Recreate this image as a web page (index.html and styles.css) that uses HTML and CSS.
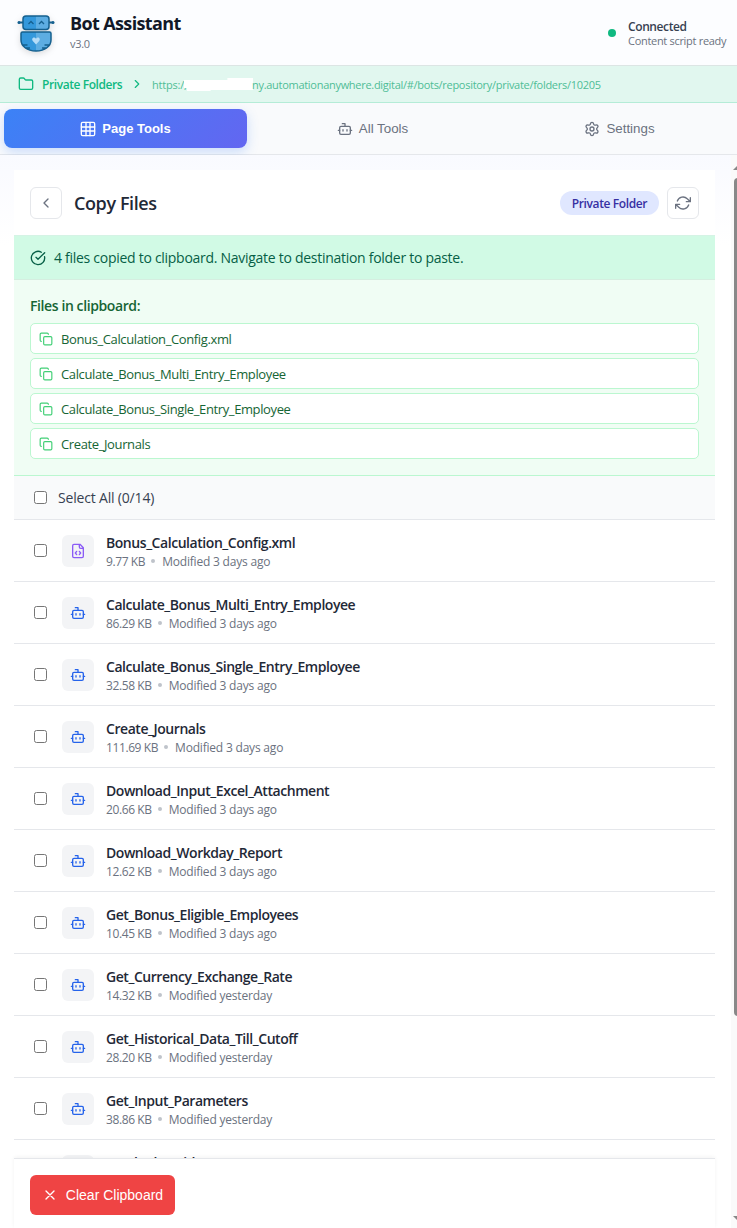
FILE: index.html
```html
<!DOCTYPE html>
<html lang="en">
<head>
<meta charset="utf-8">
<title>Bot Assistant</title>
<link rel="stylesheet" href="styles.css">
</head>
<body>
<svg class="sprite" aria-hidden="true">
  <symbol id="bot" viewBox="0 0 24 24"><path d="M12 8V4H8M2 14h2M20 14h2M15 13v2M9 13v2"/><rect x="4" y="8" width="16" height="12" rx="2"/></symbol>
  <symbol id="copy" viewBox="0 0 24 24"><rect x="8" y="8" width="14" height="14" rx="2"/><path d="M4 16c-1.100 0-2-.9-2-2V4c0-1.100.9-2 2-2h10c1.100 0 2 .9 2 2"/></symbol>
  <symbol id="code" viewBox="0 0 24 24"><path d="M15 2H6a2 2 0 0 0-2 2v16a2 2 0 0 0 2 2h12a2 2 0 0 0 2-2V7zM14 2v4a2 2 0 0 0 2 2h4M10 12.500 8 15l2 2.500M14 12.500l2 2.500-2 2.500"/></symbol>
</svg>
<div class="app">
  <header class="header">
    <svg class="logo" viewBox="0 0 38 38">
      <path d="M1.500 8.500H6M32 8.500h4.500" stroke="#15608f" stroke-width="2"/>
      <circle cx="2" cy="8.500" r="1.500" fill="#15608f"/><circle cx="36" cy="8.500" r="1.500" fill="#15608f"/>
      <rect x="6" y="2" width="26" height="13.500" rx="3" fill="#3498db"/>
      <path d="M19 2h10a3 3 0 0 1 3 3v7.500a3 3 0 0 1-3 3H19z" fill="#5dade2"/>
      <rect x="6" y="2" width="26" height="13.500" rx="3" fill="none" stroke="#15608f" stroke-width="1.500"/>
      <path d="M11.500 10l2.500-2.500 2.500 2.500M22 10l2.500-2.500L27 10" fill="none" stroke="#15608f" stroke-width="1.300"/>
      <path d="M4 19.500q0-1.500 1.500-1.500h27q1.500 0 1.500 1.500v6.500c0 6-6 11-15 11S4 32 4 26z" fill="#3498db"/>
      <path d="M19 18h13.500q1.500 0 1.500 1.500v6.500c0 6-6 11-15 11z" fill="#5dade2"/>
      <path d="M4 19.500q0-1.500 1.500-1.500h27q1.500 0 1.500 1.500v6.500c0 6-6 11-15 11S4 32 4 26zM5 31h5.500M8 34h5M33 31h-5.500M30 34h-5" fill="none" stroke="#15608f" stroke-width="1.500"/>
      <path d="M19 30.500l-3.200-3.500c-2-2.500 1.500-5 3.200-2.300 1.700-2.700 5.200-.2 3.200 2.300z" fill="#b5dcf7"/>
    </svg>
    <div class="brand"><h1 class="brand-name">Bot Assistant</h1><div class="version">v3.0</div></div>
    <div class="status"><span class="status-dot"></span><div><div class="status-title">Connected</div><div class="status-sub">Content script ready</div></div></div>
  </header>
  <div class="path">
    <svg class="icon folder" viewBox="0 0 24 24"><path d="M20 20a2 2 0 0 0 2-2V8a2 2 0 0 0-2-2h-7.900a2 2 0 0 1-1.690-.9L9.600 3.900A2 2 0 0 0 7.930 3H4a2 2 0 0 0-2 2v13a2 2 0 0 0 2 2Z"/></svg>
    <span class="path-name">Private Folders</span>
    <svg class="icon chevron" viewBox="0 0 24 24"><path d="m9 18 6-6-6-6"/></svg>
    <span class="url-start">https:/,</span>
    <svg class="redaction" viewBox="0 0 71 16"><path d="M0 4h44V2h26v12H27v1H3v-3H0z"/></svg>
    <span class="url">ny.automationanywhere.digital/#/bots/repository/private/folders/10205</span>
  </div>
  <nav class="tabs">
    <button class="tab active"><svg class="icon i16" viewBox="0 0 24 24"><rect x="2" y="2" width="20" height="20" rx="2"/><path d="M2 9h20M2 15h20M9 2v20M15 2v20"/></svg><span class="tab-label">Page Tools</span></button>
    <button class="tab"><svg class="icon i16"><use href="#bot"/></svg><span>All Tools</span></button>
    <button class="tab"><svg class="icon i16" viewBox="0 0 24 24"><path d="M9.671 4.136a2.340 2.340 0 0 1 4.659 0 2.340 2.340 0 0 0 3.319 1.915 2.340 2.340 0 0 1 2.330 4.033 2.340 2.340 0 0 0 0 3.831 2.340 2.340 0 0 1-2.330 4.033 2.340 2.340 0 0 0-3.319 1.915 2.340 2.340 0 0 1-4.659 0 2.340 2.340 0 0 0-3.320-1.915 2.340 2.340 0 0 1-2.330-4.033 2.340 2.340 0 0 0 0-3.831A2.340 2.340 0 0 1 6.350 6.051a2.340 2.340 0 0 0 3.319-1.915"/><circle cx="12" cy="12" r="3"/></svg><span>Settings</span></button>
  </nav>
  <div class="body">
    <main class="card">
      <div class="card-head">
        <button class="square"><svg class="icon i16" viewBox="0 0 24 24"><path d="m15 18-6-6 6-6"/></svg></button>
        <h2 class="card-title">Copy Files</h2>
        <span class="badge"><span class="badge-text">Private Folder</span></span>
        <button class="square"><svg class="icon i16" viewBox="0 0 24 24"><path d="M23 4v6h-6M1 20v-6h6M3.510 9a9 9 0 0 1 14.850-3.360L23 10M1 14l4.640 4.360A9 9 0 0 0 20.490 15"/></svg></button>
      </div>
      <div class="banner"><svg class="icon i16" viewBox="0 0 24 24"><path d="M21.801 10A10 10 0 1 1 17 3.335"/><path d="m9 11 3 3L22 4"/></svg><span class="banner-text">4 files copied to clipboard. Navigate to destination folder to paste.</span></div>
      <section class="clipboard">
        <h3 class="clip-title">Files in clipboard:</h3>
        <div class="clip-list">
          <div class="clip"><svg class="icon i14"><use href="#copy"/></svg><span>Bonus_Calculation_Config.xml</span></div>
          <div class="clip"><svg class="icon i14"><use href="#copy"/></svg><span>Calculate_Bonus_Multi_Entry_Employee</span></div>
          <div class="clip"><svg class="icon i14"><use href="#copy"/></svg><span>Calculate_Bonus_Single_Entry_Employee</span></div>
          <div class="clip"><svg class="icon i14"><use href="#copy"/></svg><span>Create_Journals</span></div>
        </div>
      </section>
      <div class="select-all"><span class="check"></span><span class="select-label">Select All (0/14)</span></div>
      <div class="files">
        <div class="file"><span class="check"></span><span class="tile code"><svg class="icon i16"><use href="#code"/></svg></span><div><div class="name">Bonus_Calculation_Config.xml</div><div class="meta"><span>9.77 KB</span><i class="sep"></i><span class="when">Modified 3 days ago</span></div></div></div>
        <div class="file"><span class="check"></span><span class="tile"><svg class="icon i16"><use href="#bot"/></svg></span><div><div class="name">Calculate_Bonus_Multi_Entry_Employee</div><div class="meta"><span>86.29 KB</span><i class="sep"></i><span class="when">Modified 3 days ago</span></div></div></div>
        <div class="file"><span class="check"></span><span class="tile"><svg class="icon i16"><use href="#bot"/></svg></span><div><div class="name">Calculate_Bonus_Single_Entry_Employee</div><div class="meta"><span>32.58 KB</span><i class="sep"></i><span class="when">Modified 3 days ago</span></div></div></div>
        <div class="file"><span class="check"></span><span class="tile"><svg class="icon i16"><use href="#bot"/></svg></span><div><div class="name">Create_Journals</div><div class="meta"><span>111.69 KB</span><i class="sep"></i><span class="when">Modified 3 days ago</span></div></div></div>
        <div class="file"><span class="check"></span><span class="tile"><svg class="icon i16"><use href="#bot"/></svg></span><div><div class="name">Download_Input_Excel_Attachment</div><div class="meta"><span>20.66 KB</span><i class="sep"></i><span class="when">Modified 3 days ago</span></div></div></div>
        <div class="file"><span class="check"></span><span class="tile"><svg class="icon i16"><use href="#bot"/></svg></span><div><div class="name">Download_Workday_Report</div><div class="meta"><span>12.62 KB</span><i class="sep"></i><span class="when">Modified 3 days ago</span></div></div></div>
        <div class="file"><span class="check"></span><span class="tile"><svg class="icon i16"><use href="#bot"/></svg></span><div><div class="name">Get_Bonus_Eligible_Employees</div><div class="meta"><span>10.45 KB</span><i class="sep"></i><span class="when">Modified 3 days ago</span></div></div></div>
        <div class="file"><span class="check"></span><span class="tile"><svg class="icon i16"><use href="#bot"/></svg></span><div><div class="name">Get_Currency_Exchange_Rate</div><div class="meta"><span>14.32 KB</span><i class="sep"></i><span class="when">Modified yesterday</span></div></div></div>
        <div class="file"><span class="check"></span><span class="tile"><svg class="icon i16"><use href="#bot"/></svg></span><div><div class="name">Get_Historical_Data_Till_Cutoff</div><div class="meta"><span>28.20 KB</span><i class="sep"></i><span class="when">Modified yesterday</span></div></div></div>
        <div class="file"><span class="check"></span><span class="tile"><svg class="icon i16"><use href="#bot"/></svg></span><div><div class="name">Get_Input_Parameters</div><div class="meta"><span>38.86 KB</span><i class="sep"></i><span class="when">Modified yesterday</span></div></div></div>
        <div class="file"><span class="check"></span><span class="tile"><svg class="icon i16"><use href="#bot"/></svg></span><div class="last"><div class="name">Get_lookup_id</div></div></div>
      </div>
      <footer class="footer"><button class="clear"><svg class="icon i16" viewBox="0 0 24 24"><path d="M18 6 6 18M6 6l12 12"/></svg><span>Clear Clipboard</span></button></footer>
    </main>
    <div class="scrollbar"><svg class="arrow" viewBox="0 0 12 6"><path d="M6 0l6 6H0z"/></svg><div class="thumb"></div><svg class="arrow" viewBox="0 0 12 6"><path d="M0 0h12L6 6z"/></svg></div>
  </div>
</div>
</body>
</html>
```
FILE: styles.css
```css
* { box-sizing: border-box; }
body { margin: 0; overflow: hidden; font-family: "Open Sans", "Noto Sans", sans-serif; color: #1f2937; background: #fff; }
h1, h2, h3 { margin: 0; }
button { font-family: "Liberation Sans", Arial, sans-serif; border: 0; padding: 0; background: none; }
.sprite { display: none; }
.app { width: 737px; height: 1228px; display: flex; flex-direction: column; overflow: hidden; white-space: nowrap; }
.icon { flex: none; fill: none; stroke: currentColor; stroke-width: 2; stroke-linecap: round; stroke-linejoin: round; }
.i16 { width: 16px; height: 16px; }
.i14 { width: 14px; height: 14px; }

.header { flex: none; height: 66px; padding: 0 11px 0 17px; display: flex; align-items: center; background: #fcfdff; border-bottom: 1px solid #dce5e4; }
.logo { width: 38px; height: 38px; margin-right: 15px; filter: drop-shadow(0 2px 3px #0002); }
.brand { flex: 1; padding-bottom: 4px; }
.brand-name { font-size: 18px; line-height: 24px; font-weight: 700; letter-spacing: -.63px; color: #111827; }
.version { font-size: 11px; line-height: 15px; color: #6b7280; margin-top: 1px; letter-spacing: -.3px; }
.status { display: flex; align-items: center; gap: 12px; width: 118px; }
.status-dot { flex: none; width: 8px; height: 8px; border-radius: 50%; background: #10b981; }
.status-title { font-size: 12px; line-height: 14px; font-weight: 600; color: #374151; letter-spacing: -.4px; margin-top: 2px; }
.status-sub { font-size: 11px; line-height: 14px; color: #6b7280; letter-spacing: -.3px; }

.path { flex: none; height: 37px; padding-left: 18px; display: flex; align-items: center; background: #e1f7ef; border-bottom: 1px solid #b5ecd7; color: #10b981; }
.folder { width: 16px; height: 16px; margin-right: 8px; }
.path-name { width: 80px; font-size: 12px; font-weight: 600; letter-spacing: -.42px; }
.chevron { width: 14px; height: 14px; margin: 0 8px 0 8px; }
.url-start { width: 32px; font-size: 11px; color: #4fbd96; letter-spacing: -.2px; }
.redaction { flex: none; width: 70px; height: 16px; fill: #fff; }
.url { font-size: 11px; color: #4fbd96; letter-spacing: -.29px; margin-left: -2px; }

.tabs { flex: none; height: 52px; padding: 6px 4px; display: flex; gap: 4px; background: #f9fafc; border-bottom: 1px solid #e5e7eb; }
.tab { flex: 0 0 243px; height: 39px; display: flex; align-items: center; justify-content: center; gap: 6px; font-size: 13.333px; color: #6b7280; border-radius: 8px; }
.active { color: #fff; background: linear-gradient(135deg, #3b82f6, #6366f1); box-shadow: 0 4px 12px #3b82f640; }
.tab-label { font-weight: 700; font-size: 13px; }

.body { flex: 1; min-height: 0; display: flex; justify-content: space-between; padding-left: 14px; background: linear-gradient(#f9faff, #fff 90px); }
.card { width: 701px; margin-top: 15px; display: flex; flex-direction: column; background: #fff; }
.card-head { flex: none; height: 65px; padding: 0 16px; display: flex; align-items: center; }
.square { width: 32px; height: 32px; display: flex; align-items: center; justify-content: center; border: 1px solid #e5e7eb; border-radius: 6px; background: #fff; color: #6b7280; }
.card-title { flex: 1; margin-left: 12px; font-size: 18px; font-weight: 600; letter-spacing: -.4px; }
.badge { width: 99px; height: 24px; margin-right: 8px; display: flex; align-items: center; justify-content: center; border-radius: 12px; background: #e0e7ff; color: #3730a3; font-size: 12px; font-weight: 600; letter-spacing: -.38px; padding-top: 1px; }
.banner { flex: none; height: 45px; padding: 0 16px; display: flex; align-items: center; gap: 8px; background: #d1fae5; border-bottom: 1px solid #d5eee0; border-top: 1px solid #d5f3e5; color: #065f46; font-size: 14px; letter-spacing: -.28px; }
.clipboard { flex: none; height: 196px; padding: 15px 16px 0; background: #f0fdf4; border-bottom: 1px solid #bbf7d0; }
.clip-title { font-size: 14px; line-height: 21px; font-weight: 600; color: #166534; letter-spacing: -.4px; margin-bottom: 7px; }
.clip-list { display: grid; gap: 4px; }
.clip { height: 31px; padding: 0 8px; display: flex; align-items: center; gap: 8px; background: #fff; border: 1px solid #bbf7d0; border-radius: 5px; color: #166534; font-size: 13px; letter-spacing: -.38px; }
.clip .icon { color: #41cf76; }
.select-all { flex: none; height: 44px; padding-left: 20px; display: flex; align-items: center; gap: 11px; background: #f9fafb; border-bottom: 1px solid #e5e7eb; font-size: 14px; color: #374151; letter-spacing: -.18px; }
.check { flex: none; width: 13px; height: 13px; border: 1px solid #767676; border-radius: 2.500px; background: #fff; }
.files { flex: 1; min-height: 0; overflow: hidden; }
.file { height: 62px; padding-left: 20px; display: flex; align-items: center; border-bottom: 1px solid #e5e7eb; }
.tile { flex: none; width: 32px; height: 32px; margin: 0 12px 0 15px; display: flex; align-items: center; justify-content: center; border-radius: 6px; background: #f3f4f6; color: #2563eb; }
.code { color: #8b5cf6; }
.name { padding-top: 1px; font-size: 14px; line-height: 19px; font-weight: 600; letter-spacing: -.45px; }
.meta { display: flex; align-items: center; margin-top: 1px; font-size: 12px; line-height: 17px; color: #6b7280; letter-spacing: -.4px; }
.when { letter-spacing: -.2px; }
.last { align-self: flex-start; padding-top: 12px; }
.sep { width: 4px; height: 4px; margin: 0 7px 0 6px; border-radius: 50%; background: #bfc3ca; }
.footer { flex: none; height: 70px; padding: 16px; border-top: 1px solid #e5e7eb; background: #fff; box-shadow: 0 -1px 4px #0000000d; }
.clear { width: 145px; height: 40px; display: flex; align-items: center; justify-content: center; gap: 8px; border-radius: 6px; background: #ef4444; color: #fff; font-size: 14px; }
.scrollbar { width: 6px; display: flex; flex-direction: column; overflow: hidden; background: #fafafa; padding: 9px 0 6px 3px; }
.arrow { flex: none; width: 12px; height: 6px; fill: #888; margin-left: -1px; }
.thumb { flex: none; width: 8px; height: 838px; margin: 8px 0 auto; border-radius: 4px; background: #888; }
```
